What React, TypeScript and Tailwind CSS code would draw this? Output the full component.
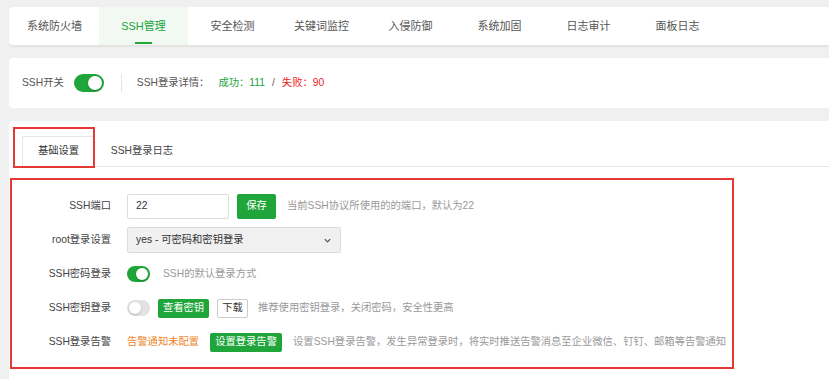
import React from "react";

const tabs = ["系统防火墙", "SSH管理", "安全检测", "关键词监控", "入侵防御", "系统加固", "日志审计", "面板日志"];

function Toggle({ on, size = "sm" }: { on: boolean; size?: "sm" | "md" }) {
  const box = size === "md" ? "h-[18px] w-[30px]" : "h-[16px] w-[23px]";
  const knob = size === "md" ? "h-[14px] w-[14px]" : "h-[12px] w-[12px]";
  return (
    <span
      className={`flex shrink-0 items-center rounded-full px-[2px] ${box} ${
        on ? "justify-end bg-[#20a53a]" : "justify-start bg-[#e2e2e2]"
      }`}
    >
      <span className={`rounded-full bg-white shadow-[0_1px_2px_rgba(0,0,0,0.2)] ${knob}`} />
    </span>
  );
}

function Row({ label, children }: { label: string; children: React.ReactNode }) {
  return (
    <div className="flex h-[34px] items-center whitespace-nowrap">
      <span className="w-[99px] shrink-0 text-right text-[#444]">{label}</span>
      <div className="ml-[16px] flex items-center">{children}</div>
    </div>
  );
}

export default function App() {
  return (
    <div
      className="h-[379px] w-full overflow-hidden whitespace-nowrap bg-[#f0f0f0] pl-[9px] pt-[7px] text-[10.3px] leading-none"
      style={{ fontFamily: '"Liberation Sans", "Noto Sans CJK SC", sans-serif' }}
    >
      {/* top tabs */}
      <div className="flex h-[38px] items-stretch rounded-l-[4px] bg-white pl-px text-[11px] shadow-[0_2px_2px_rgba(0,0,0,0.06)]">
        {tabs.map((t, i) => (
          <div
            key={t}
            className={`relative flex w-[89px] shrink-0 items-center justify-center ${
              i === 1 ? "bg-[#f2f9f3] text-[#20a53a]" : "text-[#555]"
            }`}
          >
            {t}
            {i === 1 && <span className="absolute bottom-[1px] h-[2px] w-[17px] bg-[#20a53a]" />}
          </div>
        ))}
      </div>

      {/* ssh switch */}
      <div className="mt-[13px] flex h-[50px] items-center rounded-l-[4px] bg-white pl-[13px]">
        <span className="text-[#555]">SSH开关</span>
        <span className="ml-[10px]">
          <Toggle on size="md" />
        </span>
        <span className="ml-[17px] h-[18px] w-px bg-[#e3e3e3]" />
        <span className="ml-[15px] text-[#555]">SSH登录详情：</span>
        <span className="ml-[9px] text-[#20a53a]">成功：111</span>
        <span className="mx-[7px] text-[#555]">/</span>
        <span className="text-[#ef1c1c]">失败：90</span>
      </div>

      {/* settings card */}
      <div className="mt-[13px] h-[260px] rounded-l-[4px] bg-white pt-[15px]">
        <div className="ml-[13px] flex border-b border-[#e6e6e6]">
          <div className="relative -mb-px flex h-[30px] w-[73px] items-center justify-center border border-b-0 border-[#e6e6e6] bg-white text-[#333]">
            基础设置
            <span className="absolute -left-[10px] -top-[10px] -bottom-[2px] right-[-1px] border-2 border-[#e53935]" />
          </div>
          <div className="flex h-[30px] w-[94px] items-center justify-center text-[#444]">SSH登录日志</div>
        </div>

        <div className="ml-px mt-[11px] w-[724px] border-2 border-[#e53935] pb-[8px] pt-[9px]">
          <Row label="SSH端口">
            <span className="flex h-[25px] w-[102px] items-center rounded-[2px] border border-[#dcdcdc] pl-[8px] text-[#333]">
              22
            </span>
            <span className="ml-[8px] flex h-[25px] w-[39px] items-center justify-center rounded-[2px] bg-[#20a53a] text-white">
              保存
            </span>
            <span className="ml-[11px] text-[#999]">当前SSH协议所使用的的端口，默认为22</span>
          </Row>
          <Row label="root登录设置">
            <span className="flex h-[26px] w-[214px] items-center justify-between rounded-[2px] border border-[#dcdcdc] bg-[#f0f0f0] pl-[8px] pr-[8px] text-[#333]">
              yes - 可密码和密钥登录
              <svg width="9" height="9" viewBox="0 0 10 10" fill="none">
                <path d="M2 3.5 5 6.5 8 3.5" stroke="#555" strokeWidth="1.4" />
              </svg>
            </span>
          </Row>
          <Row label="SSH密码登录">
            <Toggle on />
            <span className="ml-[13px] text-[#999]">SSH的默认登录方式</span>
          </Row>
          <Row label="SSH密钥登录">
            <Toggle on={false} />
            <span className="ml-[8px] flex h-[19px] w-[51px] items-center justify-center rounded-[2px] bg-[#20a53a] text-white">
              查看密钥
            </span>
            <span className="ml-[8px] flex h-[19px] w-[31px] items-center justify-center rounded-[2px] border border-[#ccc] bg-white text-[#333]">
              下载
            </span>
            <span className="ml-[10px] text-[#999]">推荐使用密钥登录，关闭密码，安全性更高</span>
          </Row>
          <Row label="SSH登录告警">
            <span className="text-[#f0862a]">告警通知未配置</span>
            <span className="ml-[11px] flex h-[19px] w-[72px] items-center justify-center rounded-[2px] bg-[#20a53a] text-white">
              设置登录告警
            </span>
            <span className="ml-[11px] text-[#999]">
              设置SSH登录告警，发生异常登录时，将实时推送告警消息至企业微信、钉钉、邮箱等告警通知
            </span>
          </Row>
        </div>
      </div>
    </div>
  );
}
